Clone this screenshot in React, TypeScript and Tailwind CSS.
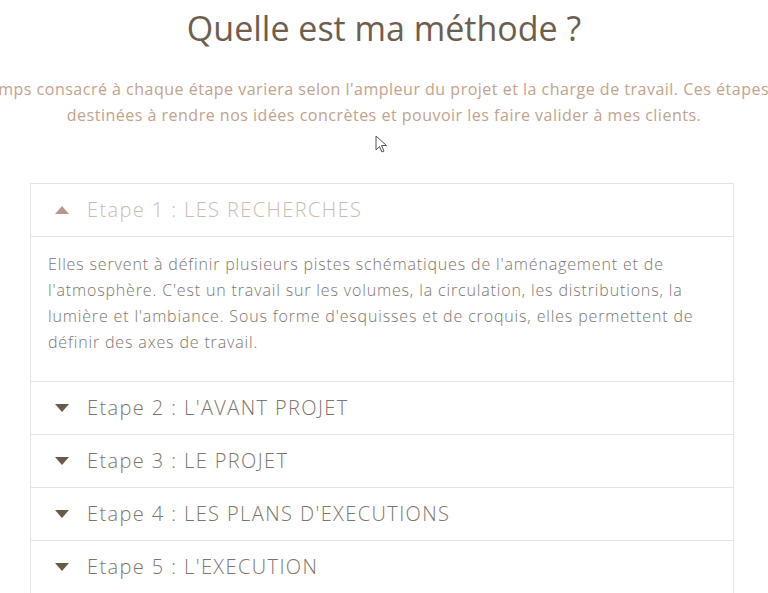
import React from "react";

const steps = [
  "Etape 2 : L'AVANT PROJET",
  "Etape 3 : LE PROJET",
  "Etape 4 : LES PLANS D'EXECUTIONS",
  "Etape 5 : L'EXECUTION",
];

function Down() {
  return (
    <svg width="14" height="9" viewBox="0 0 14 9" className="shrink-0">
      <polygon points="0,0 14,0 7,8" fill="#6b5a48" />
    </svg>
  );
}
function Up() {
  return (
    <svg width="14" height="9" viewBox="0 0 14 9" className="shrink-0">
      <polygon points="0,8 14,8 7,0" fill="#b59a87" />
    </svg>
  );
}

export default function App() {
  return (
    <div
      className="relative w-[768px] h-[593px] overflow-hidden bg-white"
      style={{ fontFamily: "'Open Sans', 'Noto Sans', sans-serif" }}
    >
      <h1 className="text-center text-[34px] leading-[40px] pt-[8px] text-[#6e5e4e] font-normal">
        Quelle est ma méthode ?
      </h1>
      <div className="flex justify-center mt-[28px]">
        <p className="shrink-0 whitespace-nowrap text-center text-[16px] leading-[26px] tracking-[0.5px] text-[#c2a38d]">
          Le temps consacré à chaque étape variera selon l'ampleur du projet et la charge de travail. Ces étapes sont
          <br />
          destinées à rendre nos idées concrètes et pouvoir les faire valider à mes clients.
        </p>
      </div>

      <div className="mx-[30px] mt-[55px] w-[704px] border border-[#e4e4e4]">
        <div className="flex items-center h-[53px] pl-[24px] gap-[18px] border-b border-[#e4e4e4]">
          <Up />
          <span className="text-[20px] tracking-[1.4px] text-[#c9bdb1] font-light">Etape 1 : LES RECHERCHES</span>
        </div>
        <div className="px-[17px] pt-[14px] pb-[26px] border-b border-[#e4e4e4]">
          <p className="text-[16px] leading-[26px] tracking-[0.85px] text-[#7c766e] font-light whitespace-nowrap">
            Elles servent à définir plusieurs pistes schématiques de l'aménagement et de
            <br />
            l'atmosphère. C'est un travail sur les volumes, la circulation, les distributions, la
            <br />
            lumière et l'ambiance. Sous forme d'esquisses et de croquis, elles permettent de
            <br />
            définir des axes de travail.
          </p>
        </div>
        {steps.map((s) => (
          <div
            key={s}
            className="flex items-center h-[53px] pl-[24px] gap-[18px] border-b border-[#e4e4e4]"
          >
            <Down />
            <span className="text-[20px] tracking-[1.4px] text-[#7d766d] font-light">{s}</span>
          </div>
        ))}
      </div>

      <svg
        className="absolute left-[375px] top-[135px]"
        width="13"
        height="19"
        viewBox="0 0 13 19"
      >
        <path
          d="M1 1 L1 15 L4.5 11.5 L7 17 L9 16 L6.5 10.5 L11.5 10.5 Z"
          fill="#fff"
          stroke="#555"
          strokeWidth="1"
          strokeLinejoin="round"
        />
      </svg>
    </div>
  );
}
